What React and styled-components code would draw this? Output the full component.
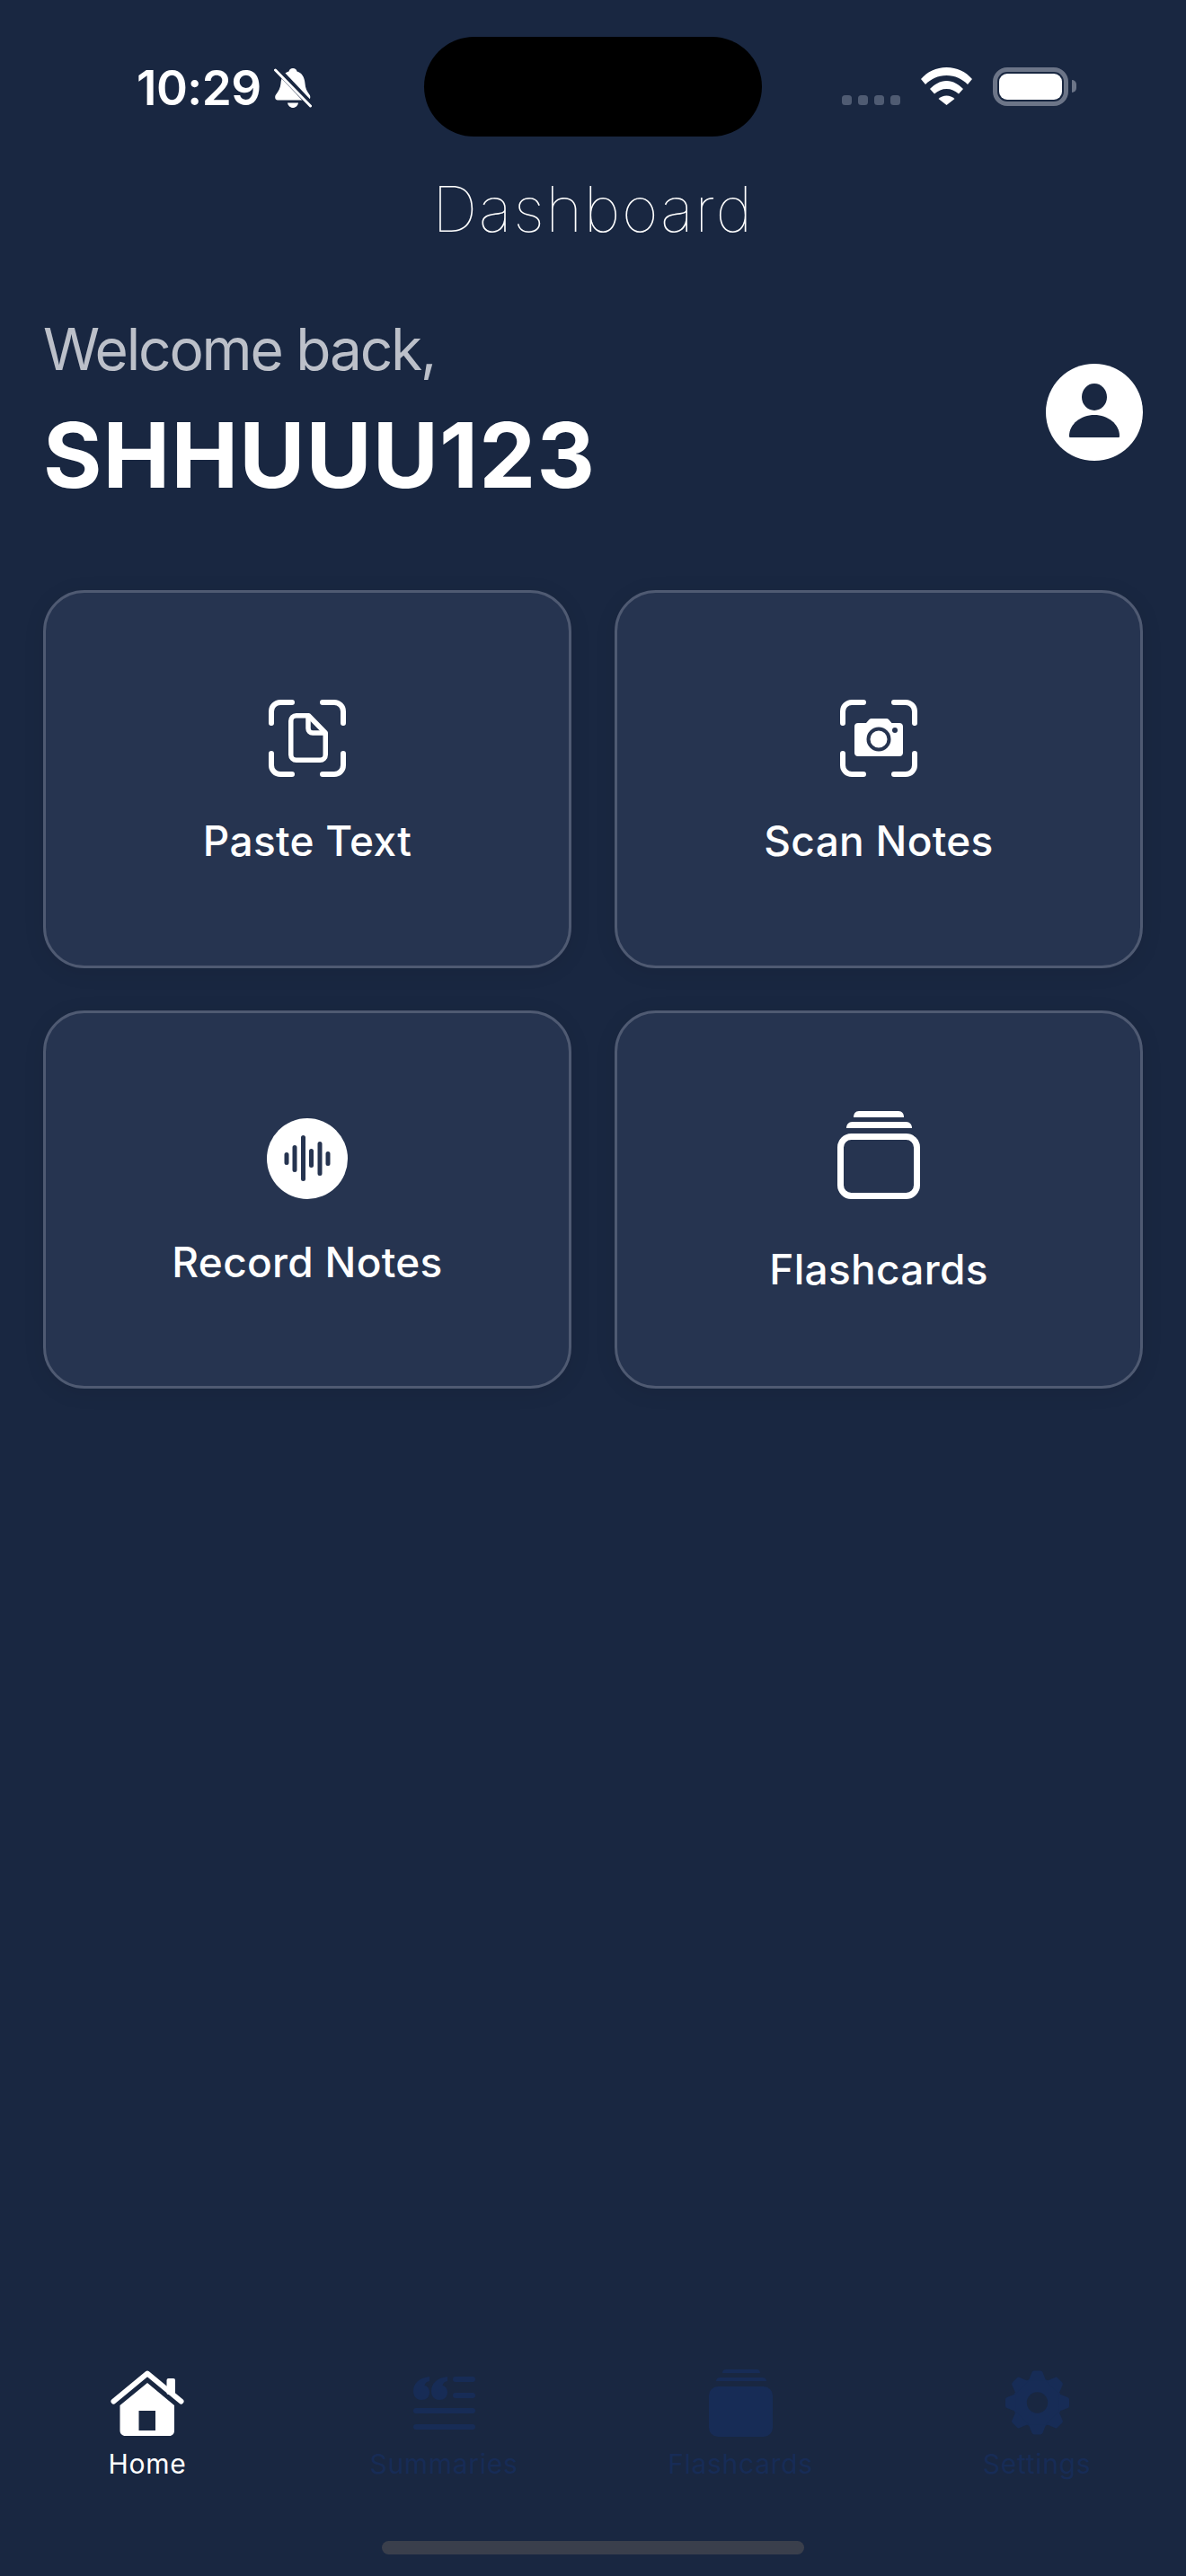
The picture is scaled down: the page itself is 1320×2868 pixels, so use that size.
import React from 'react'
import styled, { createGlobalStyle } from 'styled-components'

const GlobalStyle = createGlobalStyle`
  html, body {
    margin: 0;
    padding: 0;
    background: #192741;
  }
  * { box-sizing: border-box; }
`

const BellOffIcon = () => (
  <svg width="42" height="44" viewBox="0 0 42 44" fill="none">
    <path d="M21 0c2.500 0 4 1.500 4.500 3.500C31 5 34 10 34.500 17c.3 5 2 8.500 5 12.500 1.500 2 1 6-2 6H4c-3 0-3.500-4-2-6C5 25.500 7 22 7.500 17 8 10 11 5 16.500 3.500 17 1.500 18.500 0 21 0z" fill="#fff" />
    <path d="M15 38.500h12c-.5 3-3 5.500-6 5.500s-5.500-2.500-6-5.500z" fill="#fff" />
    <path d="M3 0.500l37 39" stroke="#192741" strokeWidth="7" />
    <path d="M1.500 2l39 40" stroke="#fff" strokeWidth="3" strokeLinecap="round" />
  </svg>
)

const WifiIcon = () => (
  <svg width="57" height="42" viewBox="0 0 57 42" fill="#fff">
    <path d="M0 13C7 5 17 0 28.500 0S50 5 57 13l-5 6C46 13 38 9 28.500 9S11 13 5 19z" />
    <path d="M10 24c5-5 11-9 18.500-9S42 19 47 24l-5 5.500C38 26 33.500 24 28.500 24S19 26 15 29.500z" />
    <path d="M19.500 35c2.500-2 5.500-3.500 9-3.500s6.500 1.500 9 3.500L28.500 42z" />
  </svg>
)

const SCAN_CORNERS = 'M2 25V12C2 6.500 6.500 2 12 2h13M59 2h13c5.500 0 10 4.500 10 10v13M82 59v13c0 5.500-4.500 10-10 10H59M25 82H12C6.500 82 2 77.500 2 72V59'

const PasteIcon = () => (
  <svg width="88" height="88" viewBox="-2 -2 88 88" fill="none">
    <path d={SCAN_CORNERS} stroke="#fff" strokeWidth="6" strokeLinecap="round" />
    <path d="M29.750 16.750H43.500L62.250 36v24.250c0 3.300-2.700 6-6 6H29.750c-3.300 0-6-2.700-6-6V22.750c0-3.300 2.700-6 6-6z" stroke="#fff" strokeWidth="5.500" strokeLinejoin="round" />
    <path d="M43 17v14c0 3 2 5 5 5h14" stroke="#fff" strokeWidth="5.500" />
  </svg>
)

const CameraIcon = () => (
  <svg width="88" height="88" viewBox="-2 -2 88 88" fill="none">
    <path d={SCAN_CORNERS} stroke="#fff" strokeWidth="6" strokeLinecap="round" />
    <path d="M19 25h9l3-3.500c1-1.200 2.300-1.500 3.500-1.500H50c1.500 0 2.500.4 3.500 1.500l3 3.500H65c2.500 0 4 1.500 4 4V58c0 2.500-1.500 4-4 4H19c-2.500 0-4-1.500-4-4V29c0-2.500 1.500-4 4-4z" fill="#fff" />
    <circle cx="42" cy="43" r="11.500" fill="#fff" stroke="#263450" strokeWidth="4" />
    <circle cx="60" cy="33" r="3" fill="#263450" />
  </svg>
)

const WaveIcon = () => (
  <svg width="90" height="90" viewBox="0 0 90 90">
    <circle cx="45" cy="45" r="45" fill="#fff" />
    <path
      d="M22 40.500v9M31 32.500v25M40.500 21.500v46M49.500 36.500v16M59 28.500v33M68 39.500v11"
      stroke="#263450"
      strokeWidth="5"
      strokeLinecap="round"
    />
  </svg>
)

const StackIcon = () => (
  <svg width="92" height="98" viewBox="0 0 92 98" fill="none">
    <path d="M18 7c0-4 2-7 6-7h44c4 0 6 3 6 7z" fill="#fff" />
    <path d="M10 19c0-4 2.500-7 6.500-7h60c4 0 6.500 3 6.500 7z" fill="#fff" />
    <rect x="3.500" y="28.500" width="85" height="66" rx="12" stroke="#fff" strokeWidth="7" />
  </svg>
)

const HomeIcon = () => (
  <svg width="82" height="73" viewBox="0 0 82 73">
    <path d="M3.500 34.500L41 3.500l37.500 31" fill="none" stroke="#fff" strokeWidth="6" strokeLinecap="round" strokeLinejoin="round" />
    <rect x="62.500" y="9" width="9.500" height="18" rx="2" fill="#fff" />
    <path
      fillRule="evenodd"
      d="M41 14L71 39v28c0 3.500-2 6-5.500 6h-49C13 73 10.500 70.500 10.500 67V39zM31.500 45v22H50V45z"
      fill="#fff"
    />
  </svg>
)

const QUOTE_MARK = 'M18 0v5c-3.500.8-5 2.500-5.500 5 3.500.5 5.500 3.500 5.500 7.500 0 5-3.500 8.500-9 8.500S0 22 0 16C0 7 7 1.500 18 0z'

const QuoteIcon = () => (
  <svg width="69" height="59" viewBox="0 0 69 59" fill="#172c56">
    <path d={QUOTE_MARK} />
    <path d={QUOTE_MARK} transform="translate(20 0)" />
    <rect x="44" y="0" width="25" height="6" rx="3" />
    <rect x="44" y="18" width="25" height="6" rx="3" />
    <rect x="0" y="35" width="69" height="6" rx="3" />
    <rect x="0" y="53" width="69" height="6" rx="3" />
  </svg>
)

const SolidStackIcon = () => (
  <svg width="71" height="75" viewBox="0 0 71 75" fill="#172c56">
    <path d="M15 4c0-2.500 1.500-4 4-4h34c2.500 0 4 1.500 4 4z" />
    <path d="M8 13c0-2.500 2-4 4.500-4h47c2.500 0 4.500 1.500 4.500 4z" />
    <rect x="0" y="19" width="71" height="56" rx="10" />
  </svg>
)

const GearIcon = () => (
  <svg width="73" height="72" viewBox="-37 -37 74 74">
    <circle r="28" fill="#172c56" />
    {[0, 45, 90, 135, 180, 225, 270, 315].map(angle => (
      <path
        key={angle}
        d="M-10 -25L-6.500 -34Q-6 -36.500 -3.500 -36.500H3.500Q6 -36.500 6.500 -34L10 -25z"
        fill="#172c56"
        transform={`rotate(${angle})`}
      />
    ))}
    <circle r="12" fill="#192741" />
  </svg>
)

const UserIcon = () => (
  <svg width="108" height="108" viewBox="0 0 108 108">
    <circle cx="54" cy="54" r="54" fill="#fff" />
    <ellipse cx="54" cy="37" rx="14" ry="15" fill="#192741" />
    <path d="M27.500 82c-1 0-1.500-.5-1.500-1.500C26 67 39 57 54 57s28 10 28 23.500c0 1-.5 1.500-1.500 1.500z" fill="#192741" />
  </svg>
)

const tabs = [
  { label: 'Home', icon: <HomeIcon />, active: true },
  { label: 'Summaries', icon: <QuoteIcon /> },
  { label: 'Flashcards', icon: <SolidStackIcon /> },
  { label: 'Settings', icon: <GearIcon /> }
]

export default function App() {
  return (
    <Screen>
      <GlobalStyle />
      <StatusBar>
        <Clock>
          <Time>10:29</Time>
          <BellOffIcon />
        </Clock>
        <Island />
        <StatusIcons>
          <Signal>
            <SignalBar />
            <SignalBar />
            <SignalBar />
            <SignalBar />
          </Signal>
          <WifiIcon />
          <Battery>
            <BatteryFill />
            <BatteryCap />
          </Battery>
        </StatusIcons>
      </StatusBar>

      <Title>Dashboard</Title>

      <Greeting>
        <div>
          <Welcome>Welcome back,</Welcome>
          <UserName>SHHUUU123</UserName>
        </div>
        <Avatar>
          <UserIcon />
        </Avatar>
      </Greeting>

      <ActionGrid>
        <ActionCard>
          <PasteIcon />
          <ActionLabel>Paste Text</ActionLabel>
        </ActionCard>
        <ActionCard>
          <CameraIcon />
          <ActionLabel>Scan Notes</ActionLabel>
        </ActionCard>
        <ActionCard>
          <WaveIcon />
          <ActionLabel>Record Notes</ActionLabel>
        </ActionCard>
        <ActionCard $gap={50}>
          <StackIcon />
          <ActionLabel>Flashcards</ActionLabel>
        </ActionCard>
      </ActionGrid>

      <TabBar>
        {tabs.map(tab => (
          <Tab key={tab.label} $active={tab.active}>
            <TabIcon>{tab.icon}</TabIcon>
            {tab.label}
          </Tab>
        ))}
      </TabBar>
      <HomeBarRow>
        <HomeBar />
      </HomeBarRow>
    </Screen>
  )
}

const Screen = styled.div`
  width: 1320px;
  height: 2868px;
  background: #192741;
  display: flex;
  flex-direction: column;
  overflow: hidden;
  font-family: Inter, 'Liberation Sans', sans-serif;
  color: #fff;
`

const StatusBar = styled.div`
  height: 202px;
  padding: 41px 0 0 152px;
  display: flex;
  align-items: flex-start;
  flex-shrink: 0;
`

const Clock = styled.div`
  width: 320px;
  height: 111px;
  padding-top: 2px;
  display: flex;
  align-items: center;
  gap: 14px;
`

const Time = styled.span`
  font-size: 53px;
  font-weight: 600;
  letter-spacing: -0.5px;
`

const Island = styled.div`
  width: 376px;
  height: 111px;
  border-radius: 56px;
  background: #000;
`

const StatusIcons = styled.div`
  margin-left: 89px;
  margin-top: 34px;
  height: 43px;
  display: flex;
  align-items: flex-start;
  gap: 23px;
`

const Signal = styled.div`
  display: flex;
  gap: 7px;
  margin-top: 31px;
`

const SignalBar = styled.span`
  width: 11px;
  height: 11px;
  border-radius: 3.5px;
  background: #4f5b72;
`

const Battery = styled.div`
  position: relative;
  width: 84px;
  height: 43px;
  border: 5px solid #6c7588;
  border-radius: 16px;
  padding: 2px;
`

const BatteryFill = styled.div`
  width: 100%;
  height: 100%;
  background: #fff;
  border-radius: 9px;
`

const BatteryCap = styled.span`
  position: absolute;
  right: -14px;
  top: 9px;
  width: 5px;
  height: 14px;
  border-radius: 0 5px 5px 0;
  background: #6c7588;
`

const Title = styled.div`
  height: 62px;
  text-align: center;
  font-weight: 100;
  font-size: 70px;
  line-height: 62px;
  letter-spacing: 1.6px;
  color: #fff;
  flex-shrink: 0;
`

const Greeting = styled.div`
  margin-top: 86px;
  padding: 0 48px;
  display: flex;
  align-items: center;
  justify-content: space-between;
  flex-shrink: 0;
`

const Avatar = styled.div`
  display: flex;
  padding-top: 6px;
`

const Welcome = styled.div`
  font-size: 64px;
  line-height: 78px;
  font-weight: 400;
  color: #bcc0c9;
  letter-spacing: -2.2px;
`

const UserName = styled.div`
  margin-top: 24px;
  font-size: 100px;
  line-height: 110px;
  font-weight: 700;
  letter-spacing: 1.1px;
`

const ActionGrid = styled.div`
  margin-top: 95px;
  padding: 0 48px;
  display: grid;
  grid-template-columns: 588px 588px;
  grid-auto-rows: 421px;
  gap: 47px 48px;
  flex-shrink: 0;
`

const ActionCard = styled.div`
  background: #263450;
  border: 3px solid #4f5a72;
  border-radius: 46px;
  box-shadow: 0 4px 24px rgba(0, 0, 0, 0.08);
  padding-top: 7px;
  display: flex;
  flex-direction: column;
  align-items: center;
  justify-content: center;
  gap: ${props => props.$gap || 42}px;
`

const ActionLabel = styled.div`
  font-size: 46px;
  line-height: 56px;
  font-weight: 500;
  letter-spacing: 0.3px;
`

const TabBar = styled.div`
  margin-top: auto;
  margin-left: -1px;
  margin-bottom: 66px;
  display: flex;
  flex-shrink: 0;
`

const Tab = styled.div`
  width: 330px;
  display: flex;
  flex-direction: column;
  align-items: center;
  font-size: 30px;
  line-height: 40px;
  font-weight: 400;
  letter-spacing: 0.7px;
  color: ${props => (props.$active ? '#fff' : '#172c56')};
`

const TabIcon = styled.div`
  height: 86px;
  margin-bottom: 5px;
  display: flex;
  align-items: center;
  justify-content: center;
`

const HomeBarRow = styled.div`
  display: flex;
  justify-content: center;
  padding-bottom: 24px;
  flex-shrink: 0;
`

const HomeBar = styled.div`
  width: 470px;
  height: 15px;
  border-radius: 8px;
  background: #3a3f4c;
`
